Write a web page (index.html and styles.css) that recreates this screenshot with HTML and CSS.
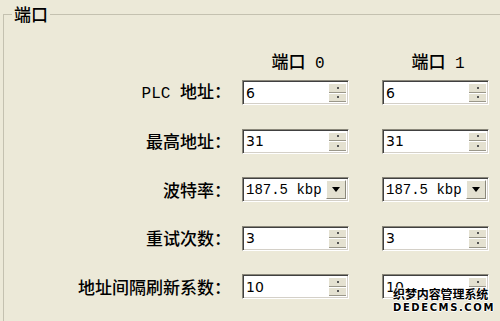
FILE: index.html
```html
<!DOCTYPE html>
<html lang="zh-CN">
  <head>
    <meta charset="UTF-8">
    <title>端口</title>
    <link rel="stylesheet" href="styles.css">
  </head>
  <body>
    <fieldset class="grupo">
      <legend>端口</legend>

      <div class="cabeceras">
        <span></span>
        <span class="cabecera">端口<span class="mono"> 0</span></span>
        <span class="cabecera">端口<span class="mono"> 1</span></span>
      </div>

      <div class="filas">
        <label class="etiqueta"><span class="mono">PLC </span>地址：</label>
        <div class="campo"><span class="valor">6</span><span class="spin"><i></i><i></i></span></div>
        <div class="campo"><span class="valor">6</span><span class="spin"><i></i><i></i></span></div>

        <label class="etiqueta">最高地址：</label>
        <div class="campo"><span class="valor">31</span><span class="spin"><i></i><i></i></span></div>
        <div class="campo"><span class="valor">31</span><span class="spin"><i></i><i></i></span></div>

        <label class="etiqueta">波特率：</label>
        <div class="campo combo"><span class="valor mono">187.5 kbp</span><span class="flecha"></span></div>
        <div class="campo combo"><span class="valor mono">187.5 kbp</span><span class="flecha"></span></div>

        <label class="etiqueta">重试次数：</label>
        <div class="campo"><span class="valor">3</span><span class="spin"><i></i><i></i></span></div>
        <div class="campo"><span class="valor">3</span><span class="spin"><i></i><i></i></span></div>

        <label class="etiqueta">地址间隔刷新系数：</label>
        <div class="campo"><span class="valor">10</span><span class="spin"><i></i><i></i></span></div>
        <div class="campo"><span class="valor">10</span><span class="spin"><i></i><i></i></span></div>
      </div>
    </fieldset>

    <!-- marca de agua del sitio de origen -->
    <div class="marca">
      <div class="marca-cn">织梦内容管理系统</div>
      <div class="marca-en">DEDECMS.COM</div>
    </div>
  </body>
</html>
```

FILE: styles.css
```css
body {
  margin: 0;
  background-color: #ece9d8;
  font-family: "Noto Sans CJK SC", "Noto Sans", sans-serif;
  color: #000;
  height: 321px;
  overflow: hidden;
  position: relative;
}

.mono { font-family: "Liberation Mono", "DejaVu Sans Mono", monospace; font-size: 16px; white-space: pre; }

.grupo {
  margin: 4px 0 0 3px;
  padding: 0 0 0 8px;
  border: 1px solid #c4c1b0;
  border-right: none;
  border-bottom: none;
  height: 330px;
  min-width: 0;
}
.grupo legend { padding: 0 2px; font-size: 17px; line-height: 20px; font-weight: 500; }

.cabeceras, .filas {
  display: grid;
  grid-template-columns: 230px 140px 107px;
}
.cabeceras { margin-top: 27px; line-height: 20px; font-size: 17px; font-weight: 500; }
.cabecera { width: 107px; padding-left: 5px; box-sizing: border-box; text-align: center; }

.filas { margin-top: 6px; grid-auto-rows: 25px; row-gap: 23.5px; }

.etiqueta {
  font-size: 17px;
  font-weight: 500;
  text-align: right;
  padding-right: 11px;
  align-self: center;
  line-height: 20px;
  white-space: nowrap;
}

.campo {
  width: 107px;
  height: 25px;
  box-sizing: border-box;
  background: #fff;
  border: 1px solid;
  border-color: #8a877a #fff #fff #8a877a;
  box-shadow: inset 1px 1px 0 #404040, inset -1px -1px 0 #d4d0c8;
  display: flex;
  align-items: center;
  padding: 2px 2px 2px 3px;
  overflow: hidden;
}
.valor { flex: 1; min-width: 0; font-family: "DejaVu Sans", sans-serif; font-size: 14px; white-space: nowrap; }
.valor.mono { font-family: "Liberation Mono", monospace; font-size: 14px; letter-spacing: 0; }

.spin { width: 17px; height: 19px; display: flex; flex-direction: column; }
.spin i {
  flex: 1;
  background: #e4e1d1;
  border-top: 1px solid #fff;
  border-bottom: 1px solid #9a978a;
  display: flex;
  align-items: center;
  justify-content: center;
}
.spin i::after { content: ""; width: 2px; height: 2px; background: #555; }

.flecha {
  width: 20px;
  height: 19px;
  flex: none;
  box-sizing: border-box;
  background: #e4e1d1;
  border: 1px solid;
  border-color: #fff #8a877a #8a877a #fff;
  display: flex;
  align-items: center;
  justify-content: center;
}
.flecha::after {
  content: "";
  border-left: 4px solid transparent;
  border-right: 4px solid transparent;
  border-top: 5px solid #000;
}

.marca {
  position: absolute;
  left: 393px;
  top: 286px;
  font-weight: bold;
  color: #000;
  text-shadow: 1px 0 #fff, -1px 0 #fff, 0 1px #fff, 0 -1px #fff;
}
.marca-cn { font-size: 12px; line-height: 15px; letter-spacing: -0.1px; }
.marca-en { font-family: "DejaVu Sans", sans-serif; font-size: 10px; line-height: 13px; letter-spacing: 1.6px; }
```
